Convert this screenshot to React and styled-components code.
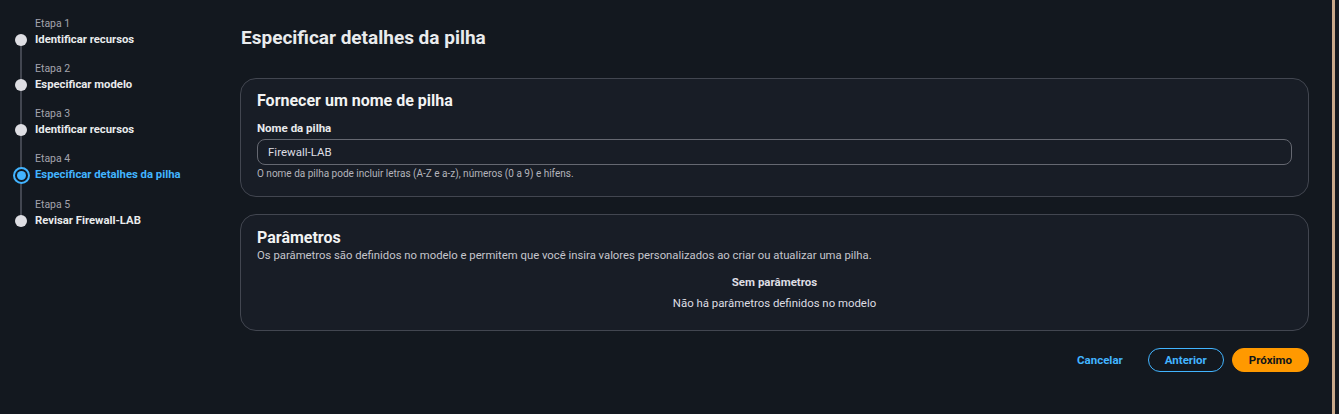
import React from "react";
import styled, { createGlobalStyle } from "styled-components";

const Global = createGlobalStyle`
  html, body { margin: 0; padding: 0; background: #13181f; }
  body { font-family: Roboto, "Liberation Sans", Arial, sans-serif; color: #dedee3; }
  * { box-sizing: border-box; }
`;

const Page = styled.div`
  display: flex;
  width: 1339px;
  height: 414px;
  background: #13181f;
  overflow: hidden;
`;

const Nav = styled.nav`
  width: 240px;
  flex: none;
  padding: 17px 0 0 15px;
  display: flex;
  flex-direction: column;
  gap: 14px;
`;

const Step = styled.div`
  position: relative;
  display: grid;
  grid-template-columns: 12px 1fr;
  column-gap: 8px;
  row-gap: 1px;
  ${(p) =>
    !p.$last &&
    `&::after {
      content: "";
      position: absolute;
      left: 5px;
      top: 23px;
      width: 2px;
      height: 45px;
      background: #424650;
    }`}
`;

const StepLabel = styled.div`
  grid-column: 2;
  font-size: 10.5px;
  line-height: 14px;
  color: #a4a4ad;
`;

const DotCell = styled.div`
  grid-column: 1;
  grid-row: 2;
  display: flex;
  align-items: center;
  justify-content: center;
  position: relative;
  z-index: 1;
`;

const Dot = styled.span`
  flex: none;
  width: ${(p) => (p.$active ? "17px" : "12px")};
  height: ${(p) => (p.$active ? "17px" : "12px")};
  border-radius: 50%;
  background: ${(p) => (p.$active ? "#13181f" : "#dedee3")};
  border: ${(p) => (p.$active ? "2px solid #42b4ff" : "none")};
  display: flex;
  align-items: center;
  justify-content: center;
  &::before {
    content: "";
    display: ${(p) => (p.$active ? "block" : "none")};
    width: 9px;
    height: 9px;
    border-radius: 50%;
    background: #42b4ff;
  }
`;

const StepTitle = styled.div`
  grid-column: 2;
  grid-row: 2;
  font-size: 11.3px;
  line-height: 16px;
  font-weight: 700;
  color: ${(p) => (p.$active ? "#42b4ff" : "#e9ebed")};
  white-space: nowrap;
`;

const Main = styled.main`
  flex: 1;
  padding: 26px 23px 0 0;
  display: flex;
  flex-direction: column;
`;

const Title = styled.h1`
  margin: 0 0 28px 1px;
  font-size: 19px;
  line-height: 24px;
  font-weight: 700;
  color: #e9ebed;
`;

const Card = styled.section`
  background: #181d26;
  border: 1px solid #424650;
  border-radius: 16px;
  padding: ${(p) => p.$pad};
  display: flex;
  flex-direction: column;
  margin-bottom: ${(p) => p.$mb || "0"};
`;

const CardHeading = styled.h2`
  margin: 0;
  font-size: 16px;
  line-height: 20px;
  font-weight: 700;
  color: #f2f3f3;
`;

const Label = styled.label`
  margin-top: 9px;
  font-size: 11.5px;
  line-height: 16px;
  font-weight: 700;
  color: #e9ebed;
`;

const Input = styled.input`
  margin-top: 3px;
  height: 26px;
  width: 100%;
  border: 1px solid #656871;
  border-radius: 8px;
  background: #181d26;
  color: #dedee3;
  font-family: inherit;
  font-size: 11.5px;
  padding: 0 10px;
  outline: none;
`;

const Hint = styled.div`
  margin-top: 2px;
  font-size: 10px;
  line-height: 14px;
  color: #b4b4bb;
`;

const Desc = styled.p`
  margin: 0;
  font-size: 11.3px;
  line-height: 16px;
  color: #c6c6cd;
`;

const Empty = styled.div`
  margin-top: 10px;
  display: flex;
  flex-direction: column;
  align-items: center;
  gap: 5px;
`;

const EmptyTitle = styled.div`
  font-size: 11.5px;
  line-height: 16px;
  font-weight: 700;
  color: #dedee3;
`;

const EmptyText = styled.div`
  font-size: 11.4px;
  line-height: 16px;
  color: #dedee3;
`;

const Actions = styled.div`
  margin-top: 17px;
  display: flex;
  justify-content: flex-end;
  gap: 8px;
`;

const Button = styled.button`
  height: 24px;
  padding: 0 16px;
  border-radius: 20px;
  font-family: inherit;
  font-size: 11.5px;
  font-weight: 700;
  cursor: pointer;
  border: 1px solid
    ${(p) => (p.$variant === "normal" ? "#42b4ff" : p.$variant === "primary" ? "#ff9900" : "transparent")};
  background: ${(p) => (p.$variant === "primary" ? "#ff9900" : "transparent")};
  color: ${(p) => (p.$variant === "primary" ? "#0f141a" : "#42b4ff")};
`;

const Edge = styled.div`
  width: 3px;
  flex: none;
  background: #c9a98a;
`;

const Gutter = styled.div`
  width: 4px;
  flex: none;
  background: #15191e;
`;

const steps = [
  "Identificar recursos",
  "Especificar modelo",
  "Identificar recursos",
  "Especificar detalhes da pilha",
  "Revisar Firewall-LAB",
];

export default function App() {
  return (
    <Page>
      <Global />
      <Nav>
        {steps.map((s, i) => {
          const active = i === 3;
          return (
            <Step key={i} $last={i === steps.length - 1}>
              <StepLabel>Etapa {i + 1}</StepLabel>
              <DotCell>
                <Dot $active={active} />
              </DotCell>
              <StepTitle $active={active}>{s}</StepTitle>
            </Step>
          );
        })}
      </Nav>
      <Main>
        <Title>Especificar detalhes da pilha</Title>
        <Card $pad="12px 16px 15px 16px" $mb="17px">
          <CardHeading>Fornecer um nome de pilha</CardHeading>
          <Label>Nome da pilha</Label>
          <Input defaultValue="Firewall-LAB" />
          <Hint>O nome da pilha pode incluir letras (A-Z e a-z), números (0 a 9) e hifens.</Hint>
        </Card>
        <Card $pad="13px 16px 19px 16px">
          <CardHeading>Parâmetros</CardHeading>
          <Desc>
            Os parâmetros são definidos no modelo e permitem que você insira valores personalizados ao criar ou
            atualizar uma pilha.
          </Desc>
          <Empty>
            <EmptyTitle>Sem parâmetros</EmptyTitle>
            <EmptyText>Não há parâmetros definidos no modelo</EmptyText>
          </Empty>
        </Card>
        <Actions>
          <Button $variant="link">Cancelar</Button>
          <Button $variant="normal">Anterior</Button>
          <Button $variant="primary">Próximo</Button>
        </Actions>
      </Main>
      <Edge />
      <Gutter />
    </Page>
  );
}
